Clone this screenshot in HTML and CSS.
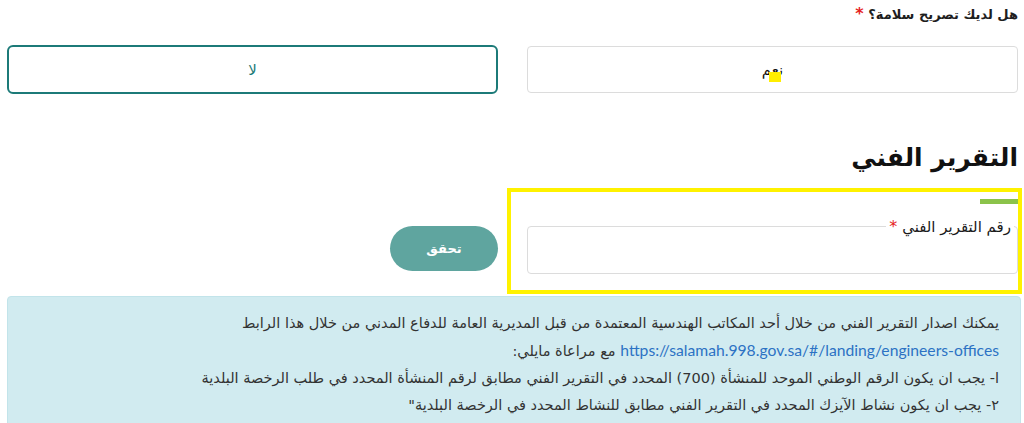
FILE: index.html
```html
<!DOCTYPE html>
<html lang="ar" dir="rtl">
<head>
<meta charset="utf-8">
<link rel="stylesheet" href="styles.css">
</head>
<body>
<main class="page">
  <div class="question">هل لديك تصريح سلامة؟ <span class="req">*</span></div>
  <div class="choices">
    <button class="choice">نعم<span class="mark"></span></button>
    <button class="choice active">لا</button>
  </div>
  <h2 class="section-title">التقرير الفني</h2>
  <div class="report-row">
    <div class="field-wrap">
      <div class="accent"></div>
      <div class="field">
        <label class="field-label">رقم التقرير الفني <span class="req">*</span></label>
        <div class="input"></div>
      </div>
    </div>
    <div class="action">
      <button class="verify">تحقق</button>
    </div>
  </div>
  <div class="info">
    <p>يمكنك اصدار التقرير الفني من خلال أحد المكاتب الهندسية المعتمدة من قبل المديرية العامة للدفاع المدني من خلال هذا الرابط</p>
    <p><a class="link" href="#">https://salamah.998.gov.sa/#/landing/engineers-offices</a> مع مراعاة مايلي:</p>
    <p>ا- يجب ان يكون الرقم الوطني الموحد للمنشأة (700) المحدد في التقرير الفني مطابق لرقم المنشأة المحدد في طلب الرخصة البلدية</p>
    <p>٢- يجب ان يكون نشاط الآيزك المحدد في التقرير الفني مطابق للنشاط المحدد في الرخصة البلدية"</p>
  </div>
</main>
</body>
</html>
```
FILE: styles.css
```css
* { box-sizing: border-box; }
html, body { margin: 0; padding: 0; background: #fff; }
body {
  font-family: "DejaVu Sans", "Noto Sans", sans-serif;
  color: #222;
  width: 1024px;
  height: 423px;
  overflow: hidden;
}
.page {
  padding: 4px 6px 0 7px;
}
.question {
  font-size: 13px;
  font-weight: bold;
  line-height: 20px;
  height: 20px;
  color: #1e1e1e;
}
.req { color: #e52222; font-size: 16px; }
.choices {
  display: grid;
  grid-template-columns: 1fr 1fr;
  column-gap: 29px;
  align-items: center;
  margin-top: 21px;
}
.choice {
  position: relative;
  font-family: inherit;
  height: 47px;
  background: #fff;
  border: 1px solid #dcdcdc;
  border-radius: 4px;
  font-size: 15px;
  color: #111;
  padding: 0;
}
.choice.active {
  height: 49px;
  border: 2px solid #1c7a78;
  border-radius: 6px;
  color: #1c7a78;
}
.mark {
  position: absolute;
  left: 241px;
  top: 25px;
  width: 12px;
  height: 10px;
  background: #ffee00;
}
.section-title {
  font-size: 25px;
  font-weight: bold;
  margin: 44px 0 0;
  line-height: 40px;
  color: #111;
}
.report-row {
  display: grid;
  grid-template-columns: 1fr 1fr;
  column-gap: 29px;
  margin-top: 14px;
}
.field-wrap {
  margin-left: -16px;
  padding: 7px 0 0 16px;
  height: 98px;
  outline: 4px solid #fff200;
}
.accent {
  width: 38px;
  height: 5px;
  background: #8bc34a;
}
.field {
  position: relative;
  margin-top: 22px;
}
.field-label {
  position: absolute;
  top: -8px;
  right: 4px;
  background: #fff;
  padding: 0 3px;
  font-size: 15px;
  line-height: 18px;
  color: #1a1a1a;
}
.field-label .req { font-size: 16px; }
.input {
  height: 48px;
  border: 1px solid #dcdcdc;
  border-radius: 4px;
}
.action {
  padding-top: 34px;
}
.verify {
  font-family: inherit;
  width: 108px;
  height: 45px;
  border: none;
  border-radius: 23px;
  background: #5fa59f;
  color: #fff;
  font-weight: bold;
  font-size: 13px;
  padding: 0;
}
.info {
  margin-top: 6px;
  margin-right: -3px;
  background: #d1ebf0;
  border: 1px solid #c2e4ea;
  border-radius: 4px;
  padding: 13px 21px 20px;
  color: #333;
  font-size: 14.5px;
  line-height: 27px;
}
.info p { margin: 0; white-space: nowrap; }
.link {
  color: #2c72c4;
  text-decoration: none;
  font-family: "Lato", "Open Sans", sans-serif;
  font-size: 15.7px;
}
```
